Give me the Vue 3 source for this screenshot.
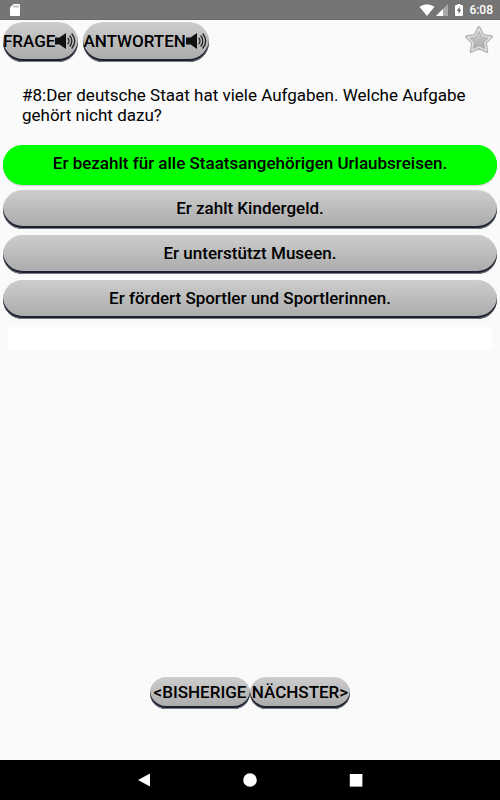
<script setup>
import { ref } from 'vue'

const question = '#8:Der deutsche Staat hat viele Aufgaben. Welche Aufgabe gehört nicht dazu?'

// 答案列表
const answers = [
    'Er bezahlt für alle Staatsangehörigen Urlaubsreisen.',
    'Er zahlt Kindergeld.',
    'Er unterstützt Museen.',
    'Er fördert Sportler und Sportlerinnen.',
]

// 正确答案的下标
const right = 0
const selected = ref(0)

const audioButtons = ['FRAGE', 'ANTWORTEN']
</script>

<template>
    <div class="screen">
        <!-- 状态栏 -->
        <header class="status">
            <svg class="sd" width="10" height="12" viewBox="0 0 10 12">
                <path d="M3.5 0H9a1 1 0 0 1 1 1v10a1 1 0 0 1-1 1H1a1 1 0 0 1-1-1V3.500z" fill="#fff" />
                <path d="M4 1.500v2M6 1.500v2M8 1.500v2" stroke="#777" stroke-width="0.900" />
            </svg>
            <svg width="16" height="12" viewBox="0 0 16 12">
                <path d="M8 12L0.500 2.800Q8 -2.400 15.500 2.800z" fill="#fff" />
            </svg>
            <svg width="12" height="12" viewBox="0 0 12 12">
                <path d="M12 0v12H0z" fill="#a9a9a9" />
                <path d="M7 5v7H0z" fill="#fff" />
            </svg>
            <svg class="battery" width="8" height="12" viewBox="0 0 8 12">
                <path d="M2.500 0h3v1H7a1 1 0 0 1 1 1v9a1 1 0 0 1-1 1H1a1 1 0 0 1-1-1V2a1 1 0 0 1 1-1h1.500z" fill="#fff" />
                <path d="M4.700 2.800L1.800 7h1.800v3L6.300 5.800H4.700z" fill="#666" />
            </svg>
            <span class="clock">6:08</span>
        </header>

        <main class="content">
            <div class="tools">
                <button v-for="name in audioButtons" :key="name" class="btn audio" type="button">
                    {{ name }}
                    <svg width="21" height="18" viewBox="0 0 21 18">
                        <path d="M0 5.500h4.500L11 1v16l-6.500-4.500H0z" fill="#111" />
                        <path d="M13 6.300q2 2.700 0 5.400M15 4q3.600 5 0 10M17 2q5.400 7 0 14" fill="none" stroke="#222"
                            stroke-width="1.300" stroke-linecap="round" />
                    </svg>
                </button>
                <button class="star" type="button" aria-label="Favorit">
                    <svg width="30" height="30" viewBox="0 0 30 30">
                        <defs>
                            <linearGradient id="starFill" x1="0" y1="0" x2="0" y2="1">
                                <stop offset="0" stop-color="#d2d2d2" />
                                <stop offset="1" stop-color="#a8a8a8" />
                            </linearGradient>
                        </defs>
                        <path d="M15 2.500l4 8 8.500 1.200-6.200 6.100 1.500 8.700-7.800-3.700-7.800 3.700 1.500-8.700-6.200-6.100 8.500-1.200z"
                            fill="#b4b4b4" stroke="#b4b4b4" stroke-width="3" stroke-linejoin="round" />
                        <path d="M15 3.500l3.700 7.500 8 1.200-5.900 5.500 1.400 7.800-7.200-3.500-7.200 3.500 1.400-7.800-5.900-5.500 8-1.200z"
                            fill="#dedede" stroke="#dedede" stroke-width="1.500" stroke-linejoin="round" />
                        <path d="M15 6.500l2.800 5.700 6.200.9-4.500 4.300 1.100 6.100-5.600-2.900-5.600 2.900 1.100-6.100-4.500-4.300 6.200-.9z"
                            fill="url(#starFill)" stroke="#a6a6a6" stroke-width="0.800" stroke-linejoin="round" />
                    </svg>
                </button>
            </div>

            <p class="question">{{ question }}</p>

            <div class="answers">
                <button v-for="(answer, i) in answers" :key="i" type="button" class="btn answer"
                    :class="{ right: selected === i && i === right }" @click="selected = i">
                    {{ answer }}
                </button>
            </div>

            <div class="hint"></div>

            <div class="pager">
                <button class="btn page" type="button">&lt;BISHERIGE</button>
                <button class="btn page" type="button">NÄCHSTER&gt;</button>
            </div>
        </main>

        <!-- 系统导航栏 -->
        <nav class="navbar">
            <button type="button" aria-label="Zurück">
                <svg width="14" height="14" viewBox="0 0 14 14">
                    <path d="M13 0.500v13L1 7z" fill="#fff" />
                </svg>
            </button>
            <button type="button" aria-label="Start">
                <svg width="14" height="14" viewBox="0 0 14 14">
                    <circle cx="7" cy="7" r="6.800" fill="#fff" />
                </svg>
            </button>
            <button type="button" aria-label="Übersicht">
                <svg width="14" height="14" viewBox="0 0 14 14">
                    <rect x="0.800" y="1" width="12.600" height="12.600" fill="#fff" />
                </svg>
            </button>
        </nav>
    </div>
</template>

<style>
body {
    margin: 0;
    background: #fafafa;
}
</style>

<style scoped>
.screen {
    display: flex;
    flex-direction: column;
    min-height: 100vh;
    background: #fafafa;
    color: #000;
    font-family: Roboto, "Liberation Sans", sans-serif;
}

button {
    margin: 0;
    padding: 0;
    border: 0;
    background: none;
    color: inherit;
    font-family: inherit;
    cursor: pointer;
}

svg {
    display: block;
    flex: none;
}

.status {
    display: flex;
    align-items: center;
    box-sizing: border-box;
    height: 20px;
    padding: 0 7px 0 10px;
    gap: 1px;
    background: #757575;
    border-bottom: 1px solid #6a666a;
}

.sd {
    margin-right: auto;
}

.battery {
    margin: 0 5px 0 6px;
}

.clock {
    color: #fff;
    font-size: 12px;
    font-weight: 500;
    line-height: 20px;
}

.content {
    display: flex;
    flex: 1;
    flex-direction: column;
}

.btn {
    background: linear-gradient(#cdcdcd, #a9a9a9);
    border-radius: 20px;
    box-shadow: inset 0 -1px 0 #777c80, inset 0 -3px 0 #1c2030;
    font-size: 17px;
    font-weight: 500;
}

.tools {
    display: flex;
    align-items: flex-start;
    gap: 5px;
    padding: 2px 6px 0 3px;
}

.audio {
    display: flex;
    align-items: center;
    height: 40px;
    padding: 0 2px 2px 0;
}

.star {
    margin: 3px 0 0 auto;
}

.question {
    margin: 23px 22px 20px;
    font-size: 17px;
    line-height: 20px;
}

.answers {
    display: flex;
    flex-direction: column;
    gap: 6px;
    padding: 0 3px;
}

.answer {
    min-height: 39px;
    padding: 0 20px 3px;
}

.answer.right {
    background: #00ff00;
    box-shadow: 0 1px 0 #00ff00, 0 2px 1px #d8c8d8;
}

.hint {
    height: 23px;
    margin: 8px 8px 0;
    background: #fff;
}

.pager {
    display: flex;
    justify-content: center;
    margin-top: auto;
    padding: 20px 0 51px;
}

.page {
    width: 100px;
    height: 32px;
    padding: 0 0 2px;
}

.navbar {
    display: flex;
    justify-content: center;
    align-items: center;
    height: 40px;
    gap: 92px;
    background: #000;
}
</style>
